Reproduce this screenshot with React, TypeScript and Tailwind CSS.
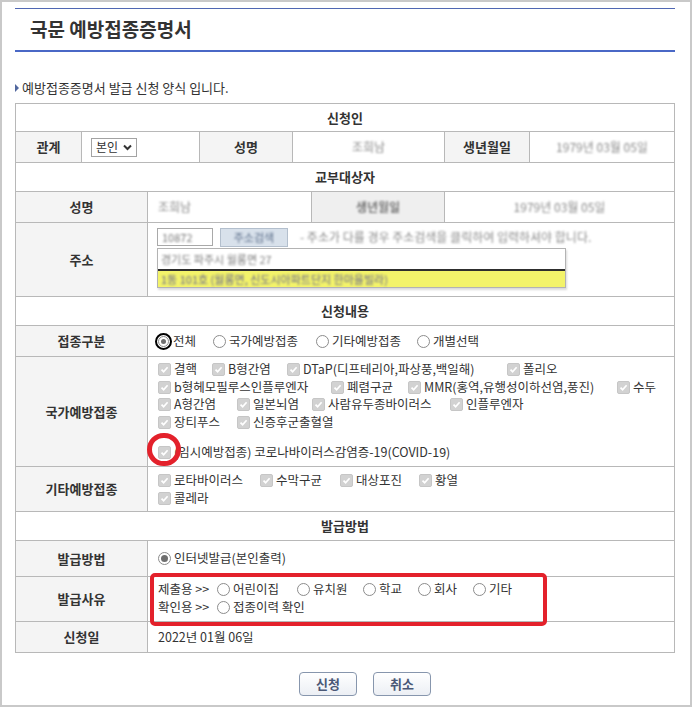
import React from "react";

const Check = () => (
  <span className="inline-flex w-[13px] h-[13px] shrink-0 items-center justify-center rounded-[2px] bg-[#d2d2d2] border border-[#c6c6c6]">
    <svg width="11" height="11" viewBox="0 0 11 11">
      <path d="M2.5 5.6 L4.6 7.7 L8.6 3.2" fill="none" stroke="#ffffff" strokeWidth="1.7" />
    </svg>
  </span>
);

const Radio = ({ on }: { on?: boolean }) => (
  <span className="inline-flex w-[13px] h-[13px] shrink-0 items-center justify-center rounded-full border border-[#8c8c8c] bg-white">
    {on && <span className="w-[7px] h-[7px] rounded-full bg-[#6e6e6e]" />}
  </span>
);

const Opt = ({ w, children }: { w: string; children: React.ReactNode }) => (
  <div className={`flex items-center gap-[3px] ${w}`}>
    <Check />
    <span className="whitespace-nowrap">{children}</span>
  </div>
);

const RadioOpt = ({ w, on, children }: { w: string; on?: boolean; children: React.ReactNode }) => (
  <div className={`flex items-center gap-[3px] ${w}`}>
    <Radio on={on} />
    <span className="whitespace-nowrap">{children}</span>
  </div>
);

const Label = ({ children }: { children: React.ReactNode }) => (
  <div className="flex items-center justify-center bg-[#f4f4f4] border-r border-[#b8b8b8] font-bold text-[13px] text-[#333]">
    {children}
  </div>
);

const Head = ({ children }: { children: React.ReactNode }) => (
  <div className="h-[29px] flex items-center justify-center border-b border-[#b8b8b8] font-bold text-[13px] text-[#333]">
    {children}
  </div>
);

const Blur = ({ className, children }: { className?: string; children: React.ReactNode }) => (
  <span className={`blur-[1.2px] whitespace-nowrap ${className ?? ""}`}>{children}</span>
);

export default function App() {
  return (
    <div className="w-[692px] h-[707px] border-2 border-[#c9c9c9] bg-white pl-[13px] pr-[15px] pt-[6px] font-['Noto_Sans_CJK_KR','Noto_Sans',sans-serif] text-[#333] text-[12px]">
      {/* title */}
      <div className="border-t border-[#4f67b3]" />
      <div className="h-[41px] flex items-center pl-[15px] text-[19px] font-bold text-[#333]">국문 예방접종증명서</div>
      <div className="h-[2px] bg-[#4a68c6]" />

      <div className="mt-[28px] h-[16px] flex items-center gap-[3px]">
        <svg width="4" height="8" viewBox="0 0 4 8">
          <path d="M0 0 L4 4 L0 8 Z" fill="#51679e" />
        </svg>
        <span className="text-[13px] text-[#333]">예방접종증명서 발급 신청 양식 입니다.</span>
      </div>

      {/* form table */}
      <div className="mt-[7px] border border-[#b8b8b8]">
        <div className="h-[28px] flex items-center justify-center border-b border-[#b8b8b8] font-bold text-[13px]">신청인</div>

        <div className="h-[31px] grid grid-cols-[66px_118px_93px_152px_85px_1fr] border-b border-[#b8b8b8]">
          <Label>관계</Label>
          <div className="flex items-center pl-[9px] border-r border-[#b8b8b8]">
            <div className="w-[46px] h-[19px] border border-[#a3a3a3] flex items-center justify-between px-[4px] text-[12px]">
              <span>본인</span>
              <svg width="9" height="7" viewBox="0 0 9 7">
                <path d="M1 1.5 L4.5 5 L8 1.5" fill="none" stroke="#333" strokeWidth="2" />
              </svg>
            </div>
          </div>
          <Label>성명</Label>
          <div className="flex items-center justify-center border-r border-[#b8b8b8]">
            <Blur className="text-[#8a8a8a]">조희남</Blur>
          </div>
          <Label>생년월일</Label>
          <div className="flex items-center justify-center">
            <Blur className="text-[#8a8a8a]">1979년 03월 05일</Blur>
          </div>
        </div>

        <Head>교부대상자</Head>

        <div className="h-[31px] grid grid-cols-[132px_164px_133px_1fr] border-b border-[#b8b8b8]">
          <Label>성명</Label>
          <div className="flex items-center pl-[10px] border-r border-[#b8b8b8]">
            <Blur className="text-[#8a8a8a]">조희남</Blur>
          </div>
          <div className="flex items-center justify-center bg-[#efefef] border-r border-[#b8b8b8]">
            <Blur className="font-bold text-[#777]">생년월일</Blur>
          </div>
          <div className="flex items-center justify-center">
            <Blur className="text-[#8a8a8a]">1979년 03월 05일</Blur>
          </div>
        </div>

        <div className="h-[74px] grid grid-cols-[132px_1fr] border-b border-[#b8b8b8]">
          <Label>주소</Label>
          <div className="flex flex-col pl-[9px] pt-[5px]">
            <div className="flex items-center h-[18px]">
              <div className="w-[56px] h-[18px] border border-[#a9a9a9] bg-white flex items-center pl-[4px]">
                <Blur className="text-[11px] text-[#7a7a7a]">10872</Blur>
              </div>
              <div className="ml-[7px] w-[68px] h-[19px] bg-[#d8e1eb] border border-[#b3bfcd] flex items-center justify-center">
                <Blur className="text-[11px] text-[#5b6e8a]">주소검색</Blur>
              </div>
              <Blur className="ml-[12px] text-[12px] text-[#8a8a8a]">- 주소가 다를 경우 주소검색을 클릭하여 입력하셔야 합니다.</Blur>
            </div>
            <div className="mt-[2px] w-[409px] border border-[#b3b3b3] shadow-[1px_2px_2px_rgba(0,0,0,0.15)]">
              <div className="h-[20px] bg-white flex items-center pl-[3px]">
                <Blur className="text-[11px] text-[#7d7d7d]">경기도 파주시 월롱면 27</Blur>
              </div>
              <div className="h-[18px] bg-[#f3f36a] border-t-2 border-[#2e2e2e] flex items-center pl-[3px]">
                <Blur className="text-[11px] text-[#6a6a8c]">1동 101호 (월롱면, 신도시아파트단지 한마을빌라)</Blur>
              </div>
            </div>
          </div>
        </div>

        <Head>신청내용</Head>

        <div className="h-[31px] grid grid-cols-[132px_1fr] border-b border-[#b8b8b8]">
          <Label>접종구분</Label>
          <div className="flex items-center pl-[7px] text-[12.5px]">
            <div className="flex items-center w-[58px]">
              <span className="inline-flex w-[17px] h-[17px] shrink-0 items-center justify-center rounded-full border-[2.5px] border-black bg-white">
                <span className="inline-flex w-[11px] h-[11px] items-center justify-center rounded-full border border-[#8c8c8c]">
                  <span className="w-[5px] h-[5px] rounded-full bg-[#6e6e6e]" />
                </span>
              </span>
              <span className="ml-[1px]">전체</span>
            </div>
            <RadioOpt w="w-[103px]">국가예방접종</RadioOpt>
            <RadioOpt w="w-[101px]">기타예방접종</RadioOpt>
            <RadioOpt w="w-[100px]">개별선택</RadioOpt>
          </div>
        </div>

        <div className="h-[110px] grid grid-cols-[132px_1fr] border-b border-[#b8b8b8]">
          <Label>국가예방접종</Label>
          <div className="flex flex-col pl-[10px] pt-[4px] text-[12.5px]">
            <div className="flex items-center h-[17.5px]">
              <Opt w="w-[54px]">결핵</Opt>
              <Opt w="w-[75px]">B형간염</Opt>
              <Opt w="w-[220px]">DTaP(디프테리아,파상풍,백일해)</Opt>
              <Opt w="w-[80px]">폴리오</Opt>
            </div>
            <div className="flex items-center h-[17.5px]">
              <Opt w="w-[173px]">b형헤모필루스인플루엔자</Opt>
              <Opt w="w-[77px]">폐렴구균</Opt>
              <Opt w="w-[209px]">MMR(홍역,유행성이하선염,풍진)</Opt>
              <Opt w="w-[50px]">수두</Opt>
            </div>
            <div className="flex items-center h-[17.5px]">
              <Opt w="w-[79px]">A형간염</Opt>
              <Opt w="w-[75px]">일본뇌염</Opt>
              <Opt w="w-[138px]">사람유두종바이러스</Opt>
              <Opt w="w-[90px]">인플루엔자</Opt>
            </div>
            <div className="flex items-center h-[17.5px]">
              <Opt w="w-[79px]">장티푸스</Opt>
              <Opt w="w-[120px]">신증후군출혈열</Opt>
            </div>
            <div className="flex items-center h-[17.5px] mt-[13px]">
              <div className="relative flex items-center gap-[3px]">
                <Check />
                <span className="whitespace-nowrap">(임시예방접종) 코로나바이러스감염증-19(COVID-19)</span>
                <span className="absolute left-[-11px] top-[-10px] w-[34px] h-[33px] rounded-full border-[5px] border-[#e3212b]" />
              </div>
            </div>
          </div>
        </div>

        <div className="h-[45px] grid grid-cols-[132px_1fr] border-b border-[#b8b8b8]">
          <Label>기타예방접종</Label>
          <div className="flex flex-col pl-[10px] pt-[5px] text-[12.5px]">
            <div className="flex items-center h-[17.5px]">
              <Opt w="w-[102px]">로타바이러스</Opt>
              <Opt w="w-[80px]">수막구균</Opt>
              <Opt w="w-[79px]">대상포진</Opt>
              <Opt w="w-[60px]">황열</Opt>
            </div>
            <div className="flex items-center h-[17.5px]">
              <Opt w="w-[80px]">콜레라</Opt>
            </div>
          </div>
        </div>

        <Head>발급방법</Head>

        <div className="h-[36px] grid grid-cols-[132px_1fr] border-b border-[#b8b8b8]">
          <Label>발급방법</Label>
          <div className="flex items-center pl-[10px] text-[12.5px]">
            <RadioOpt w="w-[200px]" on>
              인터넷발급(본인출력)
            </RadioOpt>
          </div>
        </div>

        <div className="relative h-[45px] grid grid-cols-[132px_1fr] border-b border-[#b8b8b8]">
          <Label>발급사유</Label>
          <div className="flex flex-col pl-[10px] pt-[3px] text-[12.5px]">
            <div className="flex items-center h-[18px]">
              <span className="w-[59px] whitespace-nowrap">제출용 &gt;&gt;</span>
              <RadioOpt w="w-[80px]">어린이집</RadioOpt>
              <RadioOpt w="w-[66px]">유치원</RadioOpt>
              <RadioOpt w="w-[55px]">학교</RadioOpt>
              <RadioOpt w="w-[55px]">회사</RadioOpt>
              <RadioOpt w="w-[50px]">기타</RadioOpt>
            </div>
            <div className="flex items-center h-[18px]">
              <span className="w-[59px] whitespace-nowrap">확인용 &gt;&gt;</span>
              <RadioOpt w="w-[120px]">접종이력 확인</RadioOpt>
            </div>
          </div>
          <span className="absolute left-[134px] top-[-4px] w-[397px] h-[53px] rounded-[5px] border-[4px] border-[#e3212b]" />
        </div>

        <div className="h-[30px] grid grid-cols-[132px_1fr]">
          <Label>신청일</Label>
          <div className="flex items-center pl-[10px] text-[12.5px]">2022년 01월 06일</div>
        </div>
      </div>

      <div className="mt-[19px] flex justify-center gap-[16px] pl-[40px]">
        <button className="w-[58px] h-[24px] rounded-[4px] border border-[#8796ad] bg-gradient-to-b from-white to-[#eceff4] text-[13px] font-bold text-[#4a5876]">
          신청
        </button>
        <button className="w-[58px] h-[24px] rounded-[4px] border border-[#8796ad] bg-gradient-to-b from-white to-[#eceff4] text-[13px] font-bold text-[#4a5876]">
          취소
        </button>
      </div>
    </div>
  );
}
